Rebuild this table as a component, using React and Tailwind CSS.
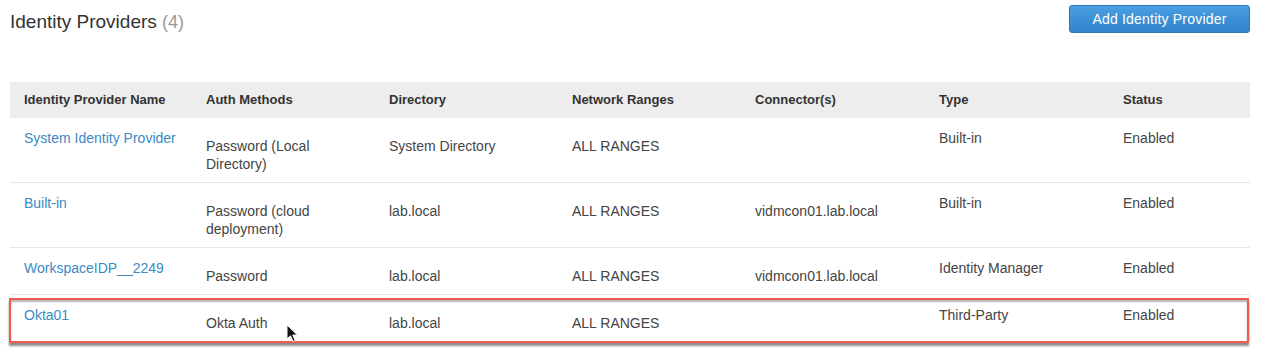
const cols = 'grid grid-cols-[182px_183px_183px_183px_184px_184px_1fr]';

const rows = [
  {
    name: 'System Identity Provider',
    auth: ['Password (Local', 'Directory)'],
    dir: 'System Directory',
    ranges: 'ALL RANGES',
    conn: '',
    type: 'Built-in',
    status: 'Enabled',
    h: 'h-[65px]',
  },
  {
    name: 'Built-in',
    auth: ['Password (cloud', 'deployment)'],
    dir: 'lab.local',
    ranges: 'ALL RANGES',
    conn: 'vidmcon01.lab.local',
    type: 'Built-in',
    status: 'Enabled',
    h: 'h-[65px]',
  },
  {
    name: 'WorkspaceIDP__2249',
    auth: ['Password'],
    dir: 'lab.local',
    ranges: 'ALL RANGES',
    conn: 'vidmcon01.lab.local',
    type: 'Identity Manager',
    status: 'Enabled',
    h: 'h-[47px]',
  },
  {
    name: 'Okta01',
    auth: ['Okta Auth'],
    dir: 'lab.local',
    ranges: 'ALL RANGES',
    conn: '',
    type: 'Third-Party',
    status: 'Enabled',
    h: 'h-[48px]',
    marked: true,
  },
];

const headers = [
  'Identity Provider Name',
  'Auth Methods',
  'Directory',
  'Network Ranges',
  'Connector(s)',
  'Type',
  'Status',
];

function Cursor() {
  return (
    <svg
      className="absolute left-[276px] top-[29px]"
      width="13"
      height="19"
      viewBox="0 0 13 19"
    >
      <path
        d="M1 1 L1 15 L4.5 11.8 L7 17.5 L9.2 16.6 L6.8 11 L11.5 11 Z"
        fill="#111"
        stroke="#fff"
        strokeWidth="1"
        strokeLinejoin="round"
      />
    </svg>
  );
}

export default function App() {
  return (
    <div className="w-[1272px] h-[352px] bg-white font-['Liberation_Sans',Arial,sans-serif] text-[#444]">
      <div className="flex items-start justify-between pl-[10px] pr-[22px] pt-[5px] h-[33px]">
        <h1 className="text-[19px] leading-[28px] text-[#333] mt-[3px]">
          Identity Providers <span className="text-[#999] text-[18px]">(4)</span>
        </h1>
        <button className="w-[181px] h-[28px] rounded-[3px] bg-gradient-to-b from-[#4aa0e2] to-[#2f82cc] border border-[#2b78bd] text-white text-[14px] leading-[26px] tracking-[0.2px]">
          Add Identity Provider
        </button>
      </div>

      <div className="mx-[10px] mt-[49px] w-[1240px]">
        <div className={`${cols} h-[36px] items-center bg-[#ededed] text-[13px] font-bold text-[#333]`}>
          {headers.map((h) => (
            <div key={h} className="pl-[14px]">
              {h}
            </div>
          ))}
        </div>

        {rows.map((r) => (
          <div
            key={r.name}
            className={`relative ${cols} ${r.h} text-[14px] leading-[18px] ${
              r.marked ? '' : 'border-b border-[#e6e6e6]'
            }`}
          >
            <div className="pl-[14px] pt-[11px] text-[#3b8ac4]">{r.name}</div>
            <div className="pl-[14px] pt-[19px]">
              {r.auth.map((a) => (
                <div key={a}>{a}</div>
              ))}
            </div>
            <div className="pl-[14px] pt-[19px]">{r.dir}</div>
            <div className="pl-[14px] pt-[19px]">{r.ranges}</div>
            <div className="pl-[14px] pt-[19px]">{r.conn}</div>
            <div className="pl-[14px] pt-[11px]">{r.type}</div>
            <div className="pl-[14px] pt-[11px]">{r.status}</div>
            {r.marked && (
              <>
                <div className="absolute left-[-1px] top-[3px] w-[1240px] h-[45px] border-2 border-[#f25a4b] shadow-[0_3px_2px_rgba(0,0,0,0.45),inset_0_2px_2px_rgba(0,0,0,0.3)] pointer-events-none" />
                <Cursor />
              </>
            )}
          </div>
        ))}
      </div>
    </div>
  );
}
